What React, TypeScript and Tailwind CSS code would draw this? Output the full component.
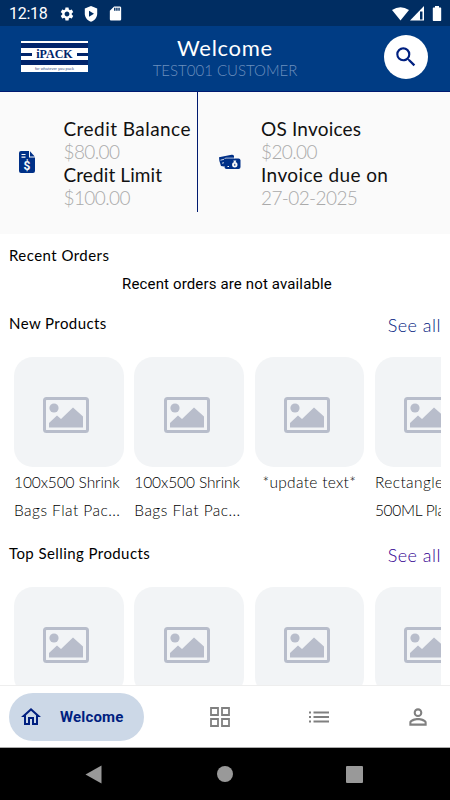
import {
	MdOutlineHome,
	MdPersonOutline,
	MdSdCard,
	MdSearch,
	MdSettings,
} from "react-icons/md";

type Product = { id: number; lines: { text: string; spacing: string }[] };

const newProducts: Product[] = [
	{
		id: 1,
		lines: [
			{ text: "100x500 Shrink", spacing: "tracking-[-0.1px]" },
			{ text: "Bags Flat Pac...", spacing: "tracking-[0.45px]" },
		],
	},
	{
		id: 2,
		lines: [
			{ text: "100x500 Shrink", spacing: "tracking-[-0.1px]" },
			{ text: "Bags Flat Pac...", spacing: "tracking-[0.45px]" },
		],
	},
	{ id: 3, lines: [{ text: "*update text*", spacing: "tracking-[0.3px]" }] },
	{
		id: 4,
		lines: [
			{ text: "Rectangle", spacing: "tracking-[0.4px]" },
			{ text: "500ML Plastic", spacing: "tracking-[-0.3px]" },
		],
	},
];

const topProducts: Product[] = [
	{ id: 5, lines: [] },
	{ id: 6, lines: [] },
	{ id: 7, lines: [] },
	{ id: 8, lines: [] },
];

const credit = [
	{ label: "Credit Balance", value: "$80.00", spacing: "tracking-[0.45px]" },
	{ label: "Credit Limit", value: "$100.00", spacing: "tracking-[0.1px]" },
];

const invoices = [
	{ label: "OS Invoices", value: "$20.00", spacing: "tracking-[0.2px]" },
	{ label: "Invoice due on", value: "27-02-2025", spacing: "tracking-[0.4px]" },
];

function StatusBar() {
	return (
		<div className="flex h-[26px] shrink-0 items-center bg-[#002d62] pl-[9px] pr-[8px] pt-px text-white">
			<span className="w-[50px] font-[Roboto] text-[16px] tracking-[-0.3px]">12:18</span>
			<MdSettings size={16} />
			<svg className="ml-[9px]" width="14" height="16" viewBox="0 0 14 16">
				<path fill="currentColor" d="M7 0 13.2 2.6V7.5C13.2 11.5 10.6 14.5 7 15.8 3.4 14.5.8 11.5.8 7.5V2.6Z" />
				<path fill="#002d62" d="M5 4.7v6l5-3z" />
			</svg>
			<MdSdCard className="ml-[9px]" size={17} />
			<div className="ml-auto flex items-center">
				<svg width="17" height="14" viewBox="0 0 17 14">
					<path fill="currentColor" d="M0 3Q8.5-2.6 17 3L8.5 13.5Z" />
				</svg>
				<svg className="ml-[1px]" width="15" height="15" viewBox="0 0 15 15">
					<path fill="currentColor" d="M14 0v14.5H0Z" />
					<path fill="#002d62" d="M10 5.500h2.500v8H10z" />
				</svg>
				<svg className="ml-[7px]" width="10" height="15" viewBox="0 0 10 15">
					<path fill="currentColor" d="M3 0h4v1.500h1.500q.7 0 .7.700v12q0 .8-.7.800h-7q-.7 0-.7-.8v-12q0-.7.700-.7H3z" />
				</svg>
			</div>
		</div>
	);
}

function Logo() {
	return (
		<div className="mb-px flex h-[31px] w-[67px] flex-col bg-white pt-[2px]">
			<div className="h-[5px] shrink-0 bg-[#00246b]" />
			<div className="flex h-[12px] shrink-0 items-center justify-between">
				<span className="h-[3px] w-[11px] bg-[#00246b]" />
				<span className="font-['Liberation_Serif'] text-[12px] font-bold leading-[12px] text-[#00246b]">
					iPACK
				</span>
				<span className="h-[3px] w-[11px] bg-[#00246b]" />
			</div>
			<div className="h-[5px] shrink-0 bg-[#00246b]" />
			<p className="text-center font-['Liberation_Sans'] text-[4px] leading-[7px] text-[#3a4f8a]">
				for whatever you pack
			</p>
		</div>
	);
}

function Header() {
	return (
		<header className="flex h-[66px] shrink-0 items-center justify-between border-b border-[#001a70] bg-[#003c84] pb-[3px] pl-[21px] pr-[22px]">
			<Logo />
			<div className="flex flex-col items-center pr-[22px] text-white">
				<h1 className="text-[22px] leading-[25px] tracking-[0.7px]">Welcome</h1>
				<p className="text-[15px] font-light leading-[20px] text-[#6c8fbd]">TEST001 CUSTOMER</p>
			</div>
			<button className="flex h-[44px] w-[44px] items-center justify-center rounded-full bg-white text-[#002080]">
				<MdSearch size={26} />
			</button>
		</header>
	);
}

function InvoiceIcon() {
	return (
		<svg className="mt-[34px] shrink-0" width="16" height="22" viewBox="0 0 16 22">
			<path fill="#003087" d="M2 0h8v6.500h6V20q0 2-2 2H2q-2 0-2-2V2Q0 0 2 0z" />
			<path fill="#003087" d="M11 .3 15.700 5.500H11z" />
			<path stroke="#fafafa" strokeWidth="1.2" d="M2.500 3.500h4M2.500 6.200h4" />
			<text x="8" y="19" textAnchor="middle" fill="#fafafa" className="font-[Roboto] text-[12px] font-bold">
				$
			</text>
		</svg>
	);
}

function MoneyIcon() {
	return (
		<svg width="22" height="16" viewBox="0 0 22 16">
			<path fill="#003087" d="M0 3.300 12.500.8q2-.3 2.500 1.300v4L5 12.500 2 12 1.200 9.500.4 7z" />
			<path stroke="#fafafa" strokeWidth=".8" d="M1.500 6.200l3.500-.9M3 9.200l2-.5" />
			<rect x="5.5" y="4.500" width="16" height="10.5" rx="2" fill="#003087" />
			<path stroke="#fafafa" strokeWidth=".7" d="M5.500 4.600 7 4.100h8.500" fill="none" />
			<circle cx="15.8" cy="10.800" r="2.700" fill="#fafafa" />
			<path d="M14.300 6.500h3l-.8 2h-1.400z" fill="#fafafa" />
			<path d="M15.800 9.800v2" stroke="#003087" />
			<path d="M8.500 12.500H10" stroke="#fafafa" />
		</svg>
	);
}

function Balance({ items }: { items: typeof credit }) {
	return (
		<div className="text-[19px] leading-[23px]">
			{items.map((item) => (
				<div key={item.label}>
					<p className={`whitespace-nowrap text-[#111] ${item.spacing}`}>{item.label}</p>
					<p className="font-light tracking-[-0.6px] text-[#aaa]">{item.value}</p>
				</div>
			))}
		</div>
	);
}

function Summary() {
	return (
		<section className="flex h-[142px] shrink-0 bg-[#fafafa]">
			<div className="flex h-[120px] w-[198px] border-r border-[#001a70] pl-[19px] pt-[25px]">
				<InvoiceIcon />
				<div className="pl-[28.5px]">
					<Balance items={credit} />
				</div>
			</div>
			<div className="flex pl-[21px] pt-[25px]">
				<div className="mt-[37px] w-[42px]">
					<MoneyIcon />
				</div>
				<Balance items={invoices} />
			</div>
		</section>
	);
}

function Placeholder() {
	return (
		<div className="flex h-[109.5px] w-[109.5px] items-center justify-center rounded-[19px] bg-[#f2f4f6] pt-[7px] pr-[5px]">
			<svg width="46" height="36" viewBox="0 0 46 36">
				<rect x="1.5" y="1.5" width="43" height="33" rx="2" fill="none" stroke="#b8bdcb" strokeWidth="3" />
				<circle cx="11" cy="11" r="4.6" fill="#b8bdcb" />
				<path fill="#b8bdcb" d="M6 30.500V26l8-7.500 4 3.500L30 10.500l10 9v11z" />
			</svg>
		</div>
	);
}

function ProductRow({ products }: { products: Product[] }) {
	return (
		<div className="ml-[14px] mr-[9px] flex gap-[10.8px] overflow-hidden">
			{products.map((product) => (
				<div key={product.id} className="w-[109.5px] shrink-0">
					<Placeholder />
					<div className="whitespace-nowrap pt-[2.5px] text-[15.5px] font-light leading-[27.5px] text-black">
						{product.lines.map((line) => (
							<p
								key={line.text}
								className={`${line.spacing} ${product.lines.length === 1 ? "text-center" : ""}`}
							>
								{line.text}
							</p>
						))}
					</div>
				</div>
			))}
		</div>
	);
}

function SectionTitle({ title, color }: { title: string; color: string }) {
	return (
		<div className="flex h-[24px] items-center justify-between px-[9px]">
			<h2 className="pb-[3px] text-[15px] tracking-[0.42px] text-black">{title}</h2>
			<a className={`text-[18px] font-light tracking-[0.5px] ${color}`}>See all</a>
		</div>
	);
}

function GridIcon() {
	return (
		<svg className="ml-[66px]" width="20" height="20" viewBox="0 0 20 20" fill="none" stroke="currentColor" strokeWidth="1.8">
			<path d="M1 1h7v7H1zM12 1h7v7h-7zM1 12h7v7H1zM12 12h7v7h-7z" />
		</svg>
	);
}

function BottomNav() {
	return (
		<nav className="flex h-[62px] shrink-0 items-center border-t border-[#eee] bg-white pl-[9px] pt-px text-[#808080]">
			<div className="flex h-[48px] w-[135px] items-center rounded-full bg-[#ccd8e7] pl-[10px] text-[#001f80]">
				<MdOutlineHome size={24} />
				<span className="pl-[17px] font-[Roboto] text-[15px] font-bold tracking-[0.15px]">Welcome</span>
			</div>
			<GridIcon />
			<svg className="ml-[79px]" width="20" height="12" viewBox="0 0 20 12">
				<path stroke="currentColor" strokeWidth="2" d="M0 1.500h2M0 6h2M0 10.500h2M4.500 1.500H20M4.500 6H20M4.500 10.500H20" />
			</svg>
			<MdPersonOutline className="ml-[76px]" size={26} />
		</nav>
	);
}

function SystemNav() {
	return (
		<div className="flex h-[53px] shrink-0 items-center border-t border-[#aaa] bg-black pl-[85px]">
			<svg width="17" height="19" viewBox="0 0 17 19">
				<path fill="#999" d="M16.500.5v18L.5 9.500z" />
			</svg>
			<div className="ml-[115px] h-[16px] w-[16px] rounded-full bg-[#999]" />
			<div className="ml-[113px] h-[17px] w-[17px] rounded-[1px] bg-[#999]" />
		</div>
	);
}

export default function App() {
	return (
		<div className="flex h-[800px] w-[450px] flex-col overflow-hidden bg-white font-[Lato,sans-serif]">
			<StatusBar />
			<Header />
			<Summary />
			<main className="min-h-0 flex-1 overflow-hidden">
				<h2 className="pl-[9px] pt-[10px] text-[15px] leading-[22px] tracking-[0.45px]">Recent Orders</h2>
				<p className="pt-[7px] pl-[4px] text-center font-[Roboto] text-[15px] leading-[22px] tracking-[0.14px]">
					Recent orders are not available
				</p>
				<div className="pt-[18px] pb-[20px]">
					<SectionTitle title="New Products" color="text-[#002080]" />
				</div>
				<ProductRow products={newProducts} />
				<div className="pt-[19px] pb-[19.5px]">
					<SectionTitle title="Top Selling Products" color="text-[#300090]" />
				</div>
				<ProductRow products={topProducts} />
			</main>
			<BottomNav />
			<SystemNav />
		</div>
	);
}
